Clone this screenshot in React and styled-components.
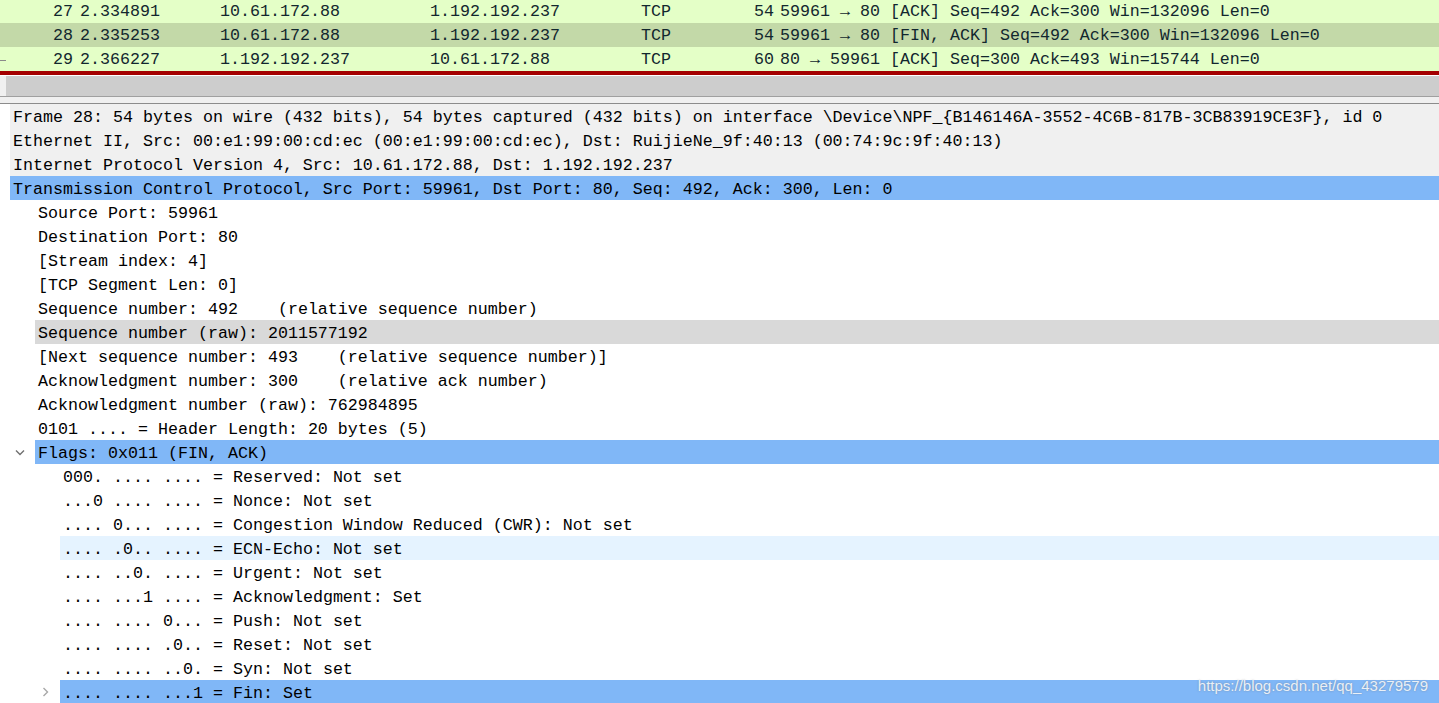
import styled, { createGlobalStyle } from 'styled-components';

const GlobalStyle = createGlobalStyle`
    html, body {
        margin: 0;
        padding: 0;
        background: #ffffff;
        overflow: hidden;
    }
`;

const packets = [
    { no: 27, time: '2.334891', src: '10.61.172.88', dst: '1.192.192.237', proto: 'TCP', len: 54, info: '59961 → 80 [ACK] Seq=492 Ack=300 Win=132096 Len=0' },
    { no: 28, time: '2.335253', src: '10.61.172.88', dst: '1.192.192.237', proto: 'TCP', len: 54, info: '59961 → 80 [FIN, ACK] Seq=492 Ack=300 Win=132096 Len=0', selected: true },
    { no: 29, time: '2.366227', src: '1.192.192.237', dst: '10.61.172.88', proto: 'TCP', len: 60, info: '80 → 59961 [ACK] Seq=300 Ack=493 Win=15744 Len=0', related: true },
];

const tree = [
    { level: 0, text: 'Frame 28: 54 bytes on wire (432 bits), 54 bytes captured (432 bits) on interface \\Device\\NPF_{B146146A-3552-4C6B-817B-3CB83919CE3F}, id 0', tone: 'shade', arrow: 'right' },
    { level: 0, text: 'Ethernet II, Src: 00:e1:99:00:cd:ec (00:e1:99:00:cd:ec), Dst: RuijieNe_9f:40:13 (00:74:9c:9f:40:13)', tone: 'shade', arrow: 'right' },
    { level: 0, text: 'Internet Protocol Version 4, Src: 10.61.172.88, Dst: 1.192.192.237', tone: 'shade', arrow: 'right' },
    { level: 0, text: 'Transmission Control Protocol, Src Port: 59961, Dst Port: 80, Seq: 492, Ack: 300, Len: 0', tone: 'selected', arrow: 'down' },
    { level: 1, text: 'Source Port: 59961' },
    { level: 1, text: 'Destination Port: 80' },
    { level: 1, text: '[Stream index: 4]' },
    { level: 1, text: '[TCP Segment Len: 0]' },
    { level: 1, text: 'Sequence number: 492    (relative sequence number)' },
    { level: 1, text: 'Sequence number (raw): 2011577192', tone: 'gray' },
    { level: 1, text: '[Next sequence number: 493    (relative sequence number)]' },
    { level: 1, text: 'Acknowledgment number: 300    (relative ack number)' },
    { level: 1, text: 'Acknowledgment number (raw): 762984895' },
    { level: 1, text: '0101 .... = Header Length: 20 bytes (5)' },
    { level: 1, text: 'Flags: 0x011 (FIN, ACK)', tone: 'selected', arrow: 'down' },
    { level: 2, text: '000. .... .... = Reserved: Not set' },
    { level: 2, text: '...0 .... .... = Nonce: Not set' },
    { level: 2, text: '.... 0... .... = Congestion Window Reduced (CWR): Not set' },
    { level: 2, text: '.... .0.. .... = ECN-Echo: Not set', tone: 'hover' },
    { level: 2, text: '.... ..0. .... = Urgent: Not set' },
    { level: 2, text: '.... ...1 .... = Acknowledgment: Set' },
    { level: 2, text: '.... .... 0... = Push: Not set' },
    { level: 2, text: '.... .... .0.. = Reset: Not set' },
    { level: 2, text: '.... .... ..0. = Syn: Not set' },
    { level: 2, text: '.... .... ...1 = Fin: Set', tone: 'selected', arrow: 'right', faint: true },
];

const tones = {
    shade: '#f0f0f0',
    selected: '#80b7f7',
    gray: '#d9d9d9',
    hover: '#e5f3ff',
};

function Chevron({ dir, faint }) {
    return (
        <ChevronBox $faint={faint}>
            <svg width="12" height="12" viewBox="0 0 12 12" fill="none" stroke="currentColor" strokeWidth="1.4">
                {dir === 'down' ? <path d="M2 4.5 L6 8.5 L10 4.5" /> : <path d="M4.5 2 L8.5 6 L4.5 10" />}
            </svg>
        </ChevronBox>
    );
}

export default function App() {
    return (
        <Page>
            <GlobalStyle />
            <PacketList>
                {packets.map((p) => (
                    <PacketRow key={p.no} $selected={p.selected}>
                        <Marker>{p.related && <RelatedTick />}</Marker>
                        <NumCell>{p.no}</NumCell>
                        <Cell>{p.time}</Cell>
                        <Cell>{p.src}</Cell>
                        <Cell>{p.dst}</Cell>
                        <Cell>{p.proto}</Cell>
                        <LenCell>{p.len}</LenCell>
                        <Cell>{p.info}</Cell>
                    </PacketRow>
                ))}
            </PacketList>
            <ScrollBar>
                <Thumb />
            </ScrollBar>
            <SplitGap />
            <Details>
                {tree.map((row, i) => (
                    <TreeRow key={i}>
                        <Gutter $level={row.level}>
                            {row.arrow && <Chevron dir={row.arrow} faint={row.faint} />}
                        </Gutter>
                        <Label $tone={row.tone}>{row.text}</Label>
                    </TreeRow>
                ))}
            </Details>
            <Watermark>https://blog.csdn.net/qq_43279579</Watermark>
        </Page>
    );
}

const Page = styled.div`
    position: relative;
    width: 1439px;
    height: 703px;
    overflow: hidden;
    background: #ffffff;
    font-family: "Liberation Mono", "DejaVu Sans Mono", monospace;
    font-size: 16.67px;
`;

const PacketList = styled.div`
    display: flex;
    flex-direction: column;
    margin-top: -1px;
    background: #e4ffc7;
    border-bottom: 4px solid #a40000;
`;

const PacketRow = styled.div`
    display: grid;
    grid-template-columns: 8px 72px 140px 210px 211px 109px 30px 1fr;
    box-sizing: border-box;
    height: 24px;
    padding-top: 2px;
    line-height: 22px;
    color: #12272e;
    white-space: pre;
    background: ${(p) => (p.$selected ? '#c3d9a8' : 'transparent')};
`;

const Marker = styled.div`
    display: flex;
    align-items: center;
`;

const RelatedTick = styled.div`
    width: 6px;
    height: 1px;
    background: #8a8a8a;
`;

const Cell = styled.div`
    overflow: hidden;
`;

const NumCell = styled.div`
    text-align: right;
    padding-right: 7px;
`;

const LenCell = styled.div`
    text-align: right;
    padding-right: 6px;
`;

const ScrollBar = styled.div`
    display: flex;
    padding-left: 6px;
    background: #f0f0f0;
    border-top: 1px solid #ffffff;
    border-bottom: 1px solid #a0a0a0;
`;

const Thumb = styled.div`
    flex: 1;
    height: 20px;
    background: #cdcdcd;
`;

const SplitGap = styled.div`
    height: 6px;
    background: #f0f0f0;
    border-bottom: 1px solid #8c8c8c;
`;

const Details = styled.div`
    display: flex;
    flex-direction: column;
    color: #000000;
`;

const TreeRow = styled.div`
    display: flex;
    height: 24px;
`;

const Gutter = styled.div`
    flex: none;
    display: flex;
    align-items: center;
    justify-content: flex-end;
    width: ${(p) => 10 + p.$level * 25}px;
`;

const ChevronBox = styled.div`
    flex: none;
    display: flex;
    margin-right: 9px;
    color: ${(p) => (p.$faint ? '#a8a8a8' : '#707070')};
`;

const Label = styled.div`
    flex: 1;
    box-sizing: border-box;
    padding: 4px 0 0 3px;
    line-height: 20px;
    white-space: pre;
    overflow: hidden;
    background: ${(p) => tones[p.$tone] || 'transparent'};
`;

const Watermark = styled.div`
    position: absolute;
    right: 11px;
    bottom: 9px;
    font-family: "Liberation Sans", Arial, sans-serif;
    font-size: 15px;
    color: rgba(255, 255, 255, 0.85);
    text-shadow: 0 0 2px rgba(110, 110, 110, 0.55);
`;
